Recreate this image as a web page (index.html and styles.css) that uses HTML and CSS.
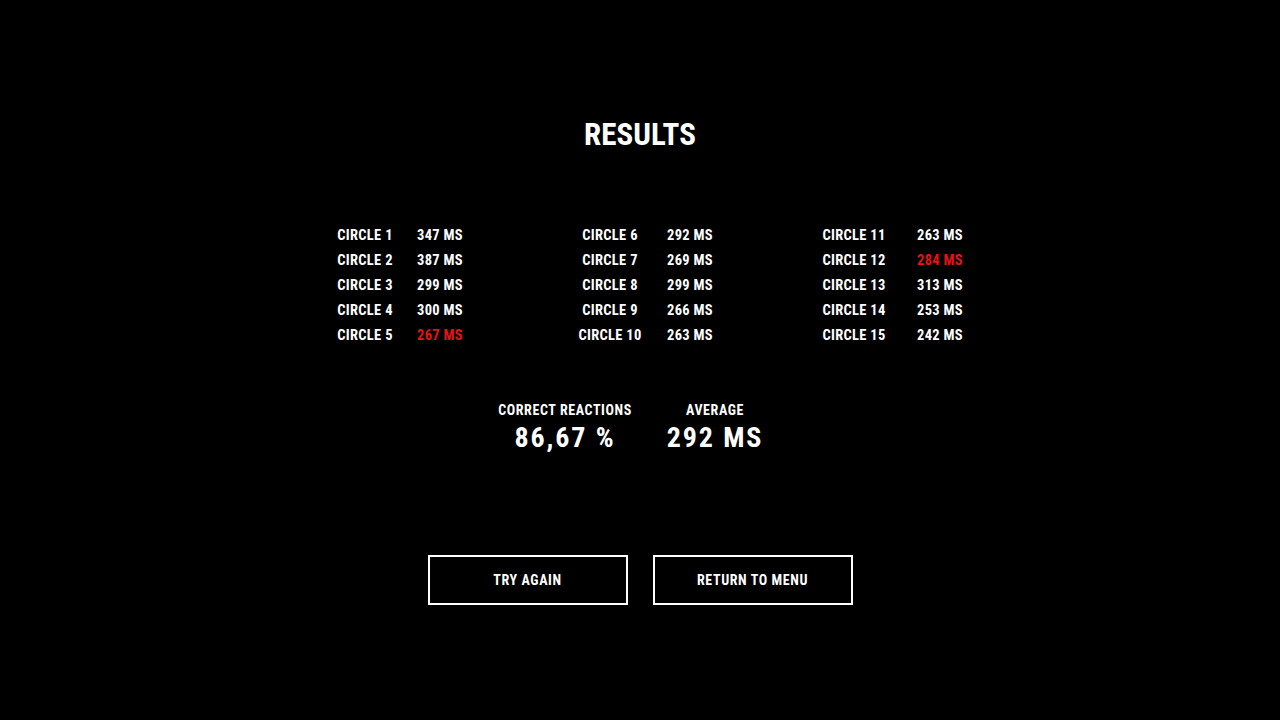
FILE: index.html
```html
<!DOCTYPE html>
<html>
<head>
<meta charset="utf-8">
<link rel="stylesheet" href="styles.css">
</head>
<body>
<main class="results">
  <h1 class="title">RESULTS</h1>
  <section class="table">
    <div class="group g1">
      <span>CIRCLE 1</span><span>347 MS</span>
      <span>CIRCLE 2</span><span>387 MS</span>
      <span>CIRCLE 3</span><span>299 MS</span>
      <span>CIRCLE 4</span><span>300 MS</span>
      <span>CIRCLE 5</span><span class="bad">267 MS</span>
    </div>
    <div class="group g2">
      <span>CIRCLE 6</span><span>292 MS</span>
      <span>CIRCLE 7</span><span>269 MS</span>
      <span>CIRCLE 8</span><span>299 MS</span>
      <span>CIRCLE 9</span><span>266 MS</span>
      <span>CIRCLE 10</span><span>263 MS</span>
    </div>
    <div class="group g3">
      <span>CIRCLE 11</span><span>263 MS</span>
      <span>CIRCLE 12</span><span class="bad">284 MS</span>
      <span>CIRCLE 13</span><span>313 MS</span>
      <span>CIRCLE 14</span><span>253 MS</span>
      <span>CIRCLE 15</span><span>242 MS</span>
    </div>
  </section>
  <section class="stats">
    <div class="stat">
      <div class="stat-label">CORRECT REACTIONS</div>
      <div class="stat-value">86,67 %</div>
    </div>
    <div class="stat">
      <div class="stat-label">AVERAGE</div>
      <div class="stat-value">292 MS</div>
    </div>
  </section>
  <section class="buttons">
    <button class="btn">TRY AGAIN</button>
    <button class="btn">RETURN TO MENU</button>
  </section>
</main>
</body>
</html>
```
FILE: styles.css
```css
html, body {
  margin: 0;
  padding: 0;
  background: #000;
}
body {
  width: 1280px;
  height: 720px;
  overflow: hidden;
  color: #fff;
  font-family: "Roboto Condensed", "Liberation Sans Narrow", "DejaVu Sans Condensed", Roboto, sans-serif;
  font-weight: 700;
}
.results {
  display: flex;
  flex-direction: column;
  align-items: center;
  padding-top: 115px;
}
.title {
  margin: 0;
  font-size: 31px;
  line-height: 40px;
  font-weight: 700;
}
.table {
  align-self: stretch;
  display: flex;
  padding-left: 330px;
  margin-top: 68px;
}
.group {
  display: grid;
  grid-auto-rows: 25px;
  font-size: 14.5px;
  line-height: 25px;
  letter-spacing: 0.3px;
  text-align: center;
}
.g1 { grid-template-columns: 70px 80px; }
.g2 { grid-template-columns: 80px 80px; margin-left: 90px; }
.g3 { grid-template-columns: 80px 92px; margin-left: 84px; }
.bad { color: #e41414; }
.stats {
  display: flex;
  margin-top: 52px;
  text-align: center;
}
.stat { width: 150px; }
.stat-label {
  font-size: 14px;
  line-height: 20px;
  letter-spacing: 0.6px;
}
.stat-value {
  font-size: 28px;
  line-height: 32px;
  letter-spacing: 1.9px;
  margin-top: 2px;
}
.buttons {
  display: flex;
  gap: 25px;
  margin-top: 101px;
}
.btn {
  box-sizing: border-box;
  width: 200px;
  height: 50px;
  background: #000;
  color: #fff;
  border: 2px solid #fff;
  font-family: inherit;
  font-weight: 700;
  font-size: 14px;
  letter-spacing: 0.6px;
  padding: 0;
}
```
